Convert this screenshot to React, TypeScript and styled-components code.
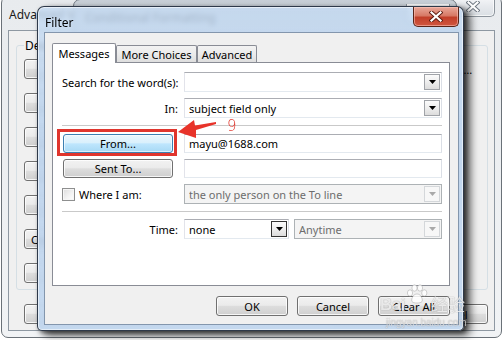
import React from 'react';
import styled, { createGlobalStyle, css } from 'styled-components';

const UI_FONT = `"Noto Sans", "Open Sans", "DejaVu Sans", sans-serif`;

const GlobalStyle = createGlobalStyle`
  html, body { margin: 0; padding: 0; }
  body {
    width: 503px; height: 340px; overflow: hidden; background: #ffffff;
    font-family: ${UI_FONT}; font-size: 11px; color: #000;
  }
  * { box-sizing: border-box; }
`;

const Desktop = styled.div`
  position: relative;
  width: 503px;
  height: 340px;
  overflow: hidden;
  background: #ffffff;
`;

/* ---------- shared window chrome ---------- */

const CaptionClose = styled.div<{ $active?: boolean; $w: number }>`
  width: ${p => p.$w}px;
  height: 20px;
  align-self: flex-start;
  margin-left: auto;
  border: 1px solid ${p => (p.$active ? '#5a2418' : '#8c949c')};
  border-top: none;
  border-radius: 0 0 5px 5px;
  display: flex;
  align-items: center;
  justify-content: center;
  ${p =>
    p.$active
      ? css`
          background: linear-gradient(180deg, #e9a99a 0%, #d77a66 45%, #c2402a 55%, #d0563f 100%);
          box-shadow: inset 0 0 0 1px rgba(255, 200, 190, 0.55);
        `
      : css`
          background: linear-gradient(180deg, #f6f7f9 0%, #e6e9ed 50%, #dadfe4 100%);
          box-shadow: inset 0 0 0 1px rgba(255, 255, 255, 0.7);
        `}
`;

const CloseGlyph: React.FC<{ active?: boolean }> = ({ active }) => (
  <svg width="14" height="11" viewBox="0 0 14 11">
    <path d="M2.5 1.5 L11.5 9.5 M11.5 1.5 L2.5 9.5" stroke={active ? '#5b1b10' : '#6d7680'} strokeWidth="4" strokeLinecap="square" />
    <path d="M2.5 1.5 L11.5 9.5 M11.5 1.5 L2.5 9.5" stroke="#ffffff" strokeWidth="2.2" strokeLinecap="square" />
  </svg>
);

/* ---------- background: Advanced View Settings ---------- */

const BgWindow = styled.div`
  position: absolute;
  left: 1px;
  top: -4px;
  width: 501px;
  height: 342px;
  border: 1px solid #6a7178;
  border-radius: 7px;
  background: linear-gradient(180deg, #e8ebee 0%, #f1f3f5 100%);
  display: flex;
  flex-direction: column;
  padding: 0 6px 6px 6px;
`;

const BgTitleBar = styled.div`
  height: 33px;
  display: flex;
  align-items: center;
  padding: 0 0 0 1px;
  font-size: 12px;
  color: #1a1a1a;
`;

const BgTitleText = styled.span`
  padding-top: 1px;
`;

const BgClient = styled.div`
  flex: 1;
  border: 1px solid #8e98a2;
  background: #f0f0f0;
  padding: 14px 6px 0 7px;
  display: flex;
  flex-direction: column;
`;

const GroupBox = styled.div`
  height: 245px;
  border: 1px solid #d5dfe5;
  border-radius: 3px;
  padding: 0 7px;
  display: flex;
  flex-direction: column;
`;

const GroupLabel = styled.span`
  align-self: flex-start;
  margin: -8px 0 0 0;
  padding: 0 1px;
  line-height: 15px;
  font-size: 12px;
  background: #f0f0f0;
`;

const GroupRows = styled.div`
  margin-top: 6px;
  display: flex;
  flex-direction: column;
  gap: 14px;
`;

const BgRow = styled.div`
  display: flex;
  align-items: center;
  gap: 14px;
  height: 20px;
`;

const PushButton = styled.button<{ $w?: number; $h?: number; $hot?: boolean; $marked?: boolean }>`
  position: relative;
  width: ${p => (p.$w ? `${p.$w}px` : 'auto')};
  height: ${p => p.$h ?? 20}px;
  flex: none;
  padding: 0 6px;
  border: 1px solid #707070;
  border-radius: 3px;
  font: 11px ${UI_FONT};
  color: #000;
  white-space: nowrap;
  background: linear-gradient(180deg, #f2f2f2 0%, #ebebeb 46%, #dddddd 52%, #cfcfcf 100%);
  box-shadow: inset 0 0 0 1px rgba(255, 255, 255, 0.8);
  ${p =>
    p.$hot &&
    css`
      border-color: #3c7fb1;
      background: linear-gradient(180deg, #eaf6fd 0%, #d9f0fc 46%, #bee6fd 52%, #a7d9f5 100%);
      box-shadow: inset 0 0 0 1px rgba(255, 255, 255, 0.6);
    `}
  ${p =>
    p.$marked &&
    css`
      &::after {
        content: '';
        position: absolute;
        left: -7px;
        top: -6px;
        right: -5px;
        bottom: -4px;
        border: 3px solid #e0352d;
        pointer-events: none;
      }
    `}
`;

const GridButton = styled(PushButton)`
  margin-left: 1px;
`;

const BgDesc = styled.span`
  flex: 1;
  min-width: 0;
  margin-right: 2px;
  white-space: nowrap;
  overflow: hidden;
  text-overflow: ellipsis;
  font-size: 11px;
  letter-spacing: 0.4px;
`;

const BgFooter = styled.div`
  margin-top: 14px;
  padding-left: 8px;
  display: flex;
  gap: 8px;
`;

const BgFooterRight = styled.div`
  margin-left: auto;
  display: flex;
  gap: 8px;
`;

/* ---------- middle: Conditional Formatting ---------- */

const MidWindow = styled.div`
  position: absolute;
  left: 73px;
  top: -1px;
  width: 384px;
  height: 318px;
  border: 1px solid #737b84;
  border-radius: 7px;
  background: linear-gradient(180deg, #c9d0d8 0%, #dde2e7 30%, #e9ecef 100%);
  display: flex;
  flex-direction: column;
  padding: 0 6px;
`;

const MidTitleBar = styled.div`
  height: 30px;
  display: flex;
  align-items: center;
  padding: 4px 0 0 5px;
  font-size: 12px;
  color: #222;
`;

/* ---------- front: Filter ---------- */

const FilterWindow = styled.div`
  position: absolute;
  left: 37px;
  top: 6px;
  width: 427px;
  height: 325px;
  border: 1px solid rgba(30, 40, 55, 0.9);
  border-radius: 7px 7px 5px 5px;
  background: linear-gradient(180deg, rgba(196, 218, 242, 0.8) 0%, rgba(186, 210, 237, 0.86) 40%, rgba(192, 214, 239, 0.9) 100%);
  backdrop-filter: blur(2.5px);
  box-shadow: inset 0 0 0 1px rgba(255, 255, 255, 0.55), 6px 4px 8px rgba(0, 0, 0, 0.7), 2px 2px 4px rgba(0, 0, 0, 0.45);
  display: flex;
  flex-direction: column;
  padding: 0 4px 5px 6px;
`;

const FilterTitleBar = styled.div`
  height: 25px;
  display: flex;
  align-items: center;
  font-size: 12px;
`;

const FilterTitle = styled.span`
  padding: 6px 0 0 1px;
`;

const Client = styled.div`
  flex: 1;
  border: 1px solid #8396ad;
  background: #f0f0f0;
  padding: 10px 8px 8px 7px;
  display: flex;
  flex-direction: column;
`;

const TabStrip = styled.div`
  height: 19px;
  display: flex;
  align-items: flex-end;
`;

const Tab = styled.div<{ $active?: boolean; $w: number }>`
  position: relative;
  width: ${p => p.$w}px;
  height: ${p => (p.$active ? 20 : 17)}px;
  margin-bottom: ${p => (p.$active ? -1 : 0)}px;
  border: 1px solid #898c95;
  border-bottom: none;
  border-radius: 2px 2px 0 0;
  display: flex;
  align-items: center;
  justify-content: center;
  font-size: 11px;
  z-index: ${p => (p.$active ? 1 : 0)};
  background: ${p => (p.$active ? '#ffffff' : 'linear-gradient(180deg, #f3f3f3 0%, #ebebeb 50%, #dedede 100%)')};
  padding-bottom: ${p => (p.$active ? 1 : 0)}px;
`;

const TabPanel = styled.div`
  height: 224px;
  flex: none;
  border: 1px solid #898c95;
  background: #ffffff;
  padding: 9px 7px 0 9px;
`;

const Form = styled.div`
  display: grid;
  grid-template-columns: 116px 1fr;
  grid-template-rows: 20px 20px 4px 19px 19px 20px 3px 20px;
  column-gap: 6px;
  row-gap: 6px;
  align-items: center;
`;

const Label = styled.span<{ $end?: boolean }>`
  justify-self: ${p => (p.$end ? 'end' : 'start')};
  white-space: nowrap;
`;

const Separator = styled.div`
  grid-column: 1 / -1;
  align-self: start;
  height: 1px;
  margin-top: 1px;
  background: #c9c9c9;
  box-shadow: 0 1px 0 #ffffff;
`;

const Field = styled.div<{ $disabled?: boolean; $w?: number; $h?: number }>`
  height: ${p => p.$h ?? 20}px;
  width: ${p => (p.$w ? `${p.$w}px` : 'auto')};
  flex: ${p => (p.$w ? 'none' : '1')};
  border: 1px solid #abadb3;
  border-color: ${p => (p.$disabled ? '#adb2b5' : '#abadb3 #dbdfe6 #e3e9ef #e2e3ea')};
  background: ${p => (p.$disabled ? '#f4f4f4' : '#ffffff')};
  color: ${p => (p.$disabled ? '#6d6d6d' : '#000')};
  display: flex;
  align-items: center;
  padding: 0 1px 0 4px;
  white-space: nowrap;
  overflow: hidden;
`;

const FieldText = styled.span`
  flex: 1;
  min-width: 0;
  overflow: hidden;
`;

const DropButton = styled.div<{ $variant?: 'normal' | 'dark' | 'disabled' }>`
  width: 16px;
  height: 16px;
  flex: none;
  display: flex;
  align-items: center;
  justify-content: center;
  border: 1px solid
    ${p => (p.$variant === 'dark' ? '#333333' : p.$variant === 'disabled' ? '#d4d7da' : '#a0a3a8')};
  background: ${p =>
    p.$variant === 'disabled'
      ? '#f7f7f7'
      : 'linear-gradient(180deg, #fbfbfb 0%, #eeeeee 50%, #dcdcdc 100%)'};
`;

const DropArrow: React.FC<{ color?: string }> = ({ color = '#000' }) => (
  <svg width="7" height="4" viewBox="0 0 7 4">
    <path d="M0 0 H7 L3.5 4 Z" fill={color} />
  </svg>
);

const Combo: React.FC<{ text?: string; w?: number; h?: number; variant?: 'normal' | 'dark' | 'disabled' }> = ({
  text = '',
  w,
  h,
  variant = 'normal',
}) => (
  <Field $w={w} $h={h} $disabled={variant === 'disabled'}>
    <FieldText>{text}</FieldText>
    <DropButton $variant={variant}>
      <DropArrow color={variant === 'disabled' ? '#a9a9a9' : '#000'} />
    </DropButton>
  </Field>
);

const FieldPair = styled.div`
  display: flex;
  gap: 5px;
`;

const CheckRow = styled.label`
  display: flex;
  align-items: center;
  gap: 4px;
  white-space: nowrap;
`;

const CheckBox = styled.span`
  width: 13px;
  height: 13px;
  border: 1px solid #8e8f8f;
  background: linear-gradient(135deg, #dcdcdc 0%, #f4f4f4 60%, #ffffff 100%);
  box-shadow: inset 0 0 0 1px #f6f6f6;
`;

const ButtonRow = styled.div`
  margin-top: 10px;
  display: flex;
  justify-content: flex-end;
  gap: 9px;
`;

/* ---------- annotation + watermark overlays ---------- */

const ArrowMark = styled.svg`
  position: absolute;
  left: 175px;
  top: 116px;
`;

const StepNumber = styled.span`
  position: absolute;
  left: 227px;
  top: 117px;
  font-family: "DejaVu Sans", sans-serif;
  font-size: 15px;
  font-weight: 300;
  color: #e2392f;
`;

const Watermark = styled.div`
  position: absolute;
  left: 380px;
  top: 284px;
  display: flex;
  flex-direction: column;
  align-items: flex-start;
  color: rgba(255, 255, 255, 0.8);
  text-shadow: 0 0 1px rgba(60, 60, 60, 0.55);
  pointer-events: none;
`;

const WatermarkTop = styled.div`
  display: flex;
  align-items: flex-end;
  gap: 1px;
`;

const WmBai = styled.span`
  font-family: "Liberation Sans", sans-serif;
  font-weight: bold;
  font-size: 17px;
  line-height: 18px;
  letter-spacing: -0.5px;
`;

const WmJy = styled.span`
  font-family: "Noto Sans CJK SC", sans-serif;
  font-size: 17px;
  line-height: 20px;
  margin-left: 2px;
`;

const WmUrl = styled.span`
  font-family: "Liberation Sans", sans-serif;
  font-size: 10px;
  margin: 3px 0 0 6px;
  color: rgba(255, 255, 255, 0.65);
`;

const PawSvg = styled.svg`
  margin-bottom: 10px;
`;

const Paw: React.FC = () => (
  <PawSvg width="22" height="20" viewBox="0 0 22 20">
    <g fill="rgba(255,255,255,0.85)" stroke="rgba(90,90,90,0.45)" strokeWidth="0.6">
      <ellipse cx="4" cy="9" rx="2.6" ry="3.2" />
      <ellipse cx="8.5" cy="4" rx="2.6" ry="3.2" />
      <ellipse cx="14" cy="4" rx="2.6" ry="3.2" />
      <ellipse cx="18.3" cy="9" rx="2.6" ry="3.2" />
      <path d="M11 10 C7 10 5 15 6 17.5 C7 19.5 15 19.5 16 17.5 C17 15 15 10 11 10 Z" />
    </g>
  </PawSvg>
);

const bgRows = [
  { label: 'Columns...', desc: 'Categories, Mention, Received, From, Subject, Size, Flag Status, Attachment, Importance, Icon' },
  { label: 'Group By...', desc: 'Off' },
  { label: 'Sort...', desc: 'Received (descending)' },
  { label: 'Filter...', desc: 'Off' },
  { label: 'Other Settings...', desc: 'Fonts and other Table View settings' },
  { label: 'Conditional Formatting...', desc: 'User defined fonts on each message' },
  { label: 'Format Columns...', desc: 'Specify the display formats for each field' },
];

export default function App() {
  return (
    <Desktop>
      <GlobalStyle />

      <BgWindow>
        <BgTitleBar>
          <BgTitleText>Advanced View Settings: Compact</BgTitleText>
          <CaptionClose $w={44}>
            <CloseGlyph />
          </CaptionClose>
        </BgTitleBar>
        <BgClient>
          <GroupBox>
            <GroupLabel>Description</GroupLabel>
            <GroupRows>
              {bgRows.map(r => (
                <BgRow key={r.label}>
                  <PushButton $w={140}>{r.label}</PushButton>
                  <BgDesc>{r.desc}</BgDesc>
                </BgRow>
              ))}
            </GroupRows>
          </GroupBox>
          <BgFooter>
            <PushButton $w={140}>Reset Current View</PushButton>
            <BgFooterRight>
              <PushButton $w={75}>OK</PushButton>
              <PushButton $w={75}>Cancel</PushButton>
            </BgFooterRight>
          </BgFooter>
        </BgClient>
      </BgWindow>

      <MidWindow>
        <MidTitleBar>
          <span>Conditional Formatting</span>
          <CaptionClose $w={44}>
            <CloseGlyph />
          </CaptionClose>
        </MidTitleBar>
      </MidWindow>

      <FilterWindow>
        <FilterTitleBar>
          <FilterTitle>Filter</FilterTitle>
          <CaptionClose $active $w={46}>
            <CloseGlyph active />
          </CaptionClose>
        </FilterTitleBar>
        <Client>
          <TabStrip>
            <Tab $active $w={64}>Messages</Tab>
            <Tab $w={81}>More Choices</Tab>
            <Tab $w={60}>Advanced</Tab>
          </TabStrip>
          <TabPanel>
            <Form>
              <Label>Search for the word(s):</Label>
              <Combo />
              <Label $end>In:</Label>
              <Combo text="subject field only" />
              <Separator />
              <GridButton $w={110} $h={19} $hot $marked>
                From...
              </GridButton>
              <Field $h={19}>
                <FieldText>mayu@1688.com</FieldText>
              </Field>
              <GridButton $w={110} $h={19}>
                Sent To...
              </GridButton>
              <Field $h={19} />
              <CheckRow>
                <CheckBox />
                Where I am:
              </CheckRow>
              <Combo text="the only person on the To line" variant="disabled" />
              <Separator />
              <Label $end>Time:</Label>
              <FieldPair>
                <Combo text="none" w={105} variant="dark" />
                <Combo text="Anytime" variant="disabled" />
              </FieldPair>
            </Form>
          </TabPanel>
          <ButtonRow>
            <PushButton $w={72}>OK</PushButton>
            <PushButton $w={72}>Cancel</PushButton>
            <PushButton $w={72}>Clear All</PushButton>
          </ButtonRow>
        </Client>
      </FilterWindow>

      <ArrowMark width="45" height="28" viewBox="0 0 45 28">
        <path d="M3 16 L19 4 L20 9.5 L41 6 L41 8 L21 14 L21 22 Z" fill="#e8332a" />
      </ArrowMark>
      <StepNumber>9</StepNumber>

      <Watermark>
        <WatermarkTop>
          <WmBai>Bai</WmBai>
          <Paw />
          <WmJy>经验</WmJy>
        </WatermarkTop>
        <WmUrl>jingyan.baidu.com</WmUrl>
      </Watermark>
    </Desktop>
  );
}
